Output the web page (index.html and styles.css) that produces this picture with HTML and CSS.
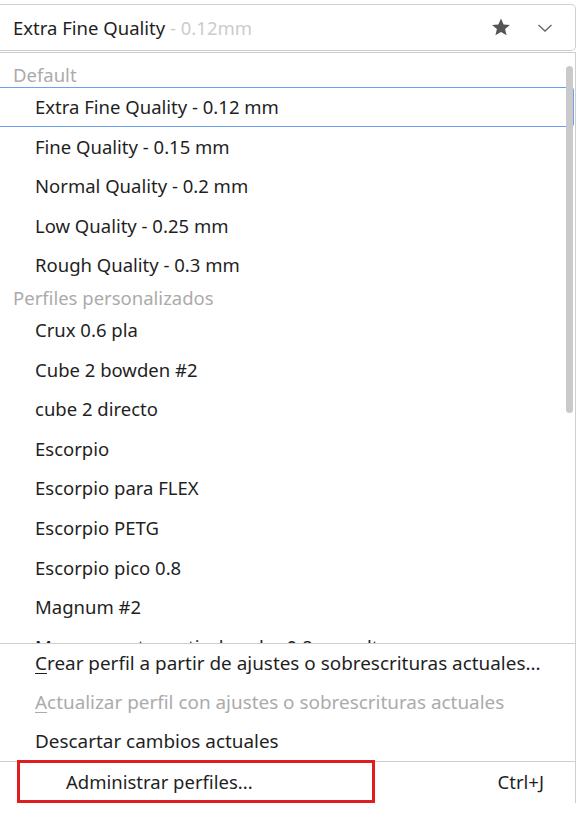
FILE: index.html
```html
<!DOCTYPE html>
<html>
<head>
<meta charset="utf-8">
<link rel="stylesheet" href="styles.css">
</head>
<body>
<div class="page">
  <div class="combo">
    <span class="combo-text">Extra Fine Quality<span class="combo-sub"> - 0.12mm</span></span>
    <svg class="star" width="20" height="20" viewBox="0 0 24 24"><path d="M12 1.8l3.1 7.1 7.6.6-5.8 5 1.8 7.5L12 18l-6.7 4 1.8-7.5-5.8-5 7.6-.6z" fill="#555"/></svg>
    <svg class="chev" width="16" height="10" viewBox="0 0 16 10"><path d="M1.5 2l6.5 6 6.5-6" fill="none" stroke="#666" stroke-width="1.3"/></svg>
  </div>
  <div class="popup">
    <div class="list">
      <div class="header first">Default</div>
      <div class="item selected">Extra Fine Quality - 0.12 mm</div>
      <div class="item">Fine Quality - 0.15 mm</div>
      <div class="item">Normal Quality - 0.2 mm</div>
      <div class="item">Low Quality - 0.25 mm</div>
      <div class="item">Rough Quality - 0.3 mm</div>
      <div class="header">Perfiles personalizados</div>
      <div class="item">Crux 0.6 pla</div>
      <div class="item">Cube 2 bowden #2</div>
      <div class="item">cube 2 directo</div>
      <div class="item">Escorpio</div>
      <div class="item">Escorpio para FLEX</div>
      <div class="item">Escorpio PETG</div>
      <div class="item">Escorpio pico 0.8</div>
      <div class="item">Magnum #2</div>
      <div class="item cut">Magnum esto vertical ancho 0.8 mm alto</div>
      <div class="scrollbar"></div>
    </div>
    <div class="menu">
      <div class="mitem"><span><u>C</u>rear perfil a partir de ajustes o sobrescrituras actuales...</span></div>
      <div class="mitem disabled"><span><u>A</u>ctualizar perfil con ajustes o sobrescrituras actuales</span></div>
      <div class="mitem"><span>Descartar cambios actuales</span></div>
      <div class="mitem manage"><span class="manage-label">Administrar perfiles...</span><span class="shortcut">Ctrl+J</span><span class="highlight-box"></span></div>
    </div>
  </div>
</div>
</body>
</html>
```
FILE: styles.css
```css
html, body {
  margin: 0;
  padding: 0;
  background: #ffffff;
}
body {
  font-family: "Noto Sans", "Open Sans", sans-serif;
  font-size: 18.5px;
  color: #1f1f1f;
  width: 578px;
  height: 818px;
  overflow: hidden;
}
.page {
  padding-top: 4px;
  width: 576px;
}
.combo {
  height: 45px;
  border: 1px solid #cfcfcf;
  border-left: none;
  border-radius: 0 5px 5px 0;
  display: flex;
  align-items: center;
  padding-left: 13px;
  padding-right: 22px;
}
.combo-text {
  flex: 1;
  white-space: nowrap;
}
.combo-sub {
  color: #cccccc;
}
.star {
  margin-right: 26px;
  margin-top: -1px;
}
.popup {
  margin-top: 1px;
  border-top: 1px solid #cfcfcf;
  border-right: 1px solid #cfcfcf;
  height: 750px;
}
.list {
  position: relative;
  height: 590px;
  overflow: hidden;
  padding-top: 9px;
  box-sizing: border-box;
}
.header {
  height: 25px;
  line-height: 25px;
  padding-left: 13px;
  color: #ababab;
  white-space: nowrap;
}
.item {
  height: 39.6px;
  line-height: 39.6px;
  padding-left: 35px;
  white-space: nowrap;
  box-sizing: border-box;
}
.item.cut {
  height: 16px;
  overflow: hidden;
}
.item.selected {
  border: 1px solid #6d9ff0;
  border-radius: 0 3px 3px 0;
  margin-left: -2px;
  margin-right: 1px;
  padding-left: 36px;
  line-height: 37.6px;
}
.scrollbar {
  position: absolute;
  left: 566px;
  top: 13px;
  width: 7px;
  height: 347px;
  background: #cacaca;
  border-radius: 4px;
}
.menu {
  border-top: 1px solid #cfcfcf;
  font-size: 18.9px;
}
.mitem {
  height: 39px;
  line-height: 39px;
  padding-left: 35px;
  white-space: nowrap;
  display: flex;
}
.mitem u {
  text-decoration-thickness: 1px;
  text-underline-offset: 3px;
}
.mitem.disabled {
  color: #ababab;
}
.mitem.manage {
  border-top: 1px solid #cfcfcf;
  position: relative;
  padding-left: 66px;
  font-size: 18.5px;
}
.manage-label {
  flex: 1;
}
.shortcut {
  margin-right: 31px;
}
.highlight-box {
  position: absolute;
  left: 17px;
  top: -2px;
  width: 358px;
  height: 43px;
  border: 3px solid #e01e1e;
  box-sizing: border-box;
}
```
